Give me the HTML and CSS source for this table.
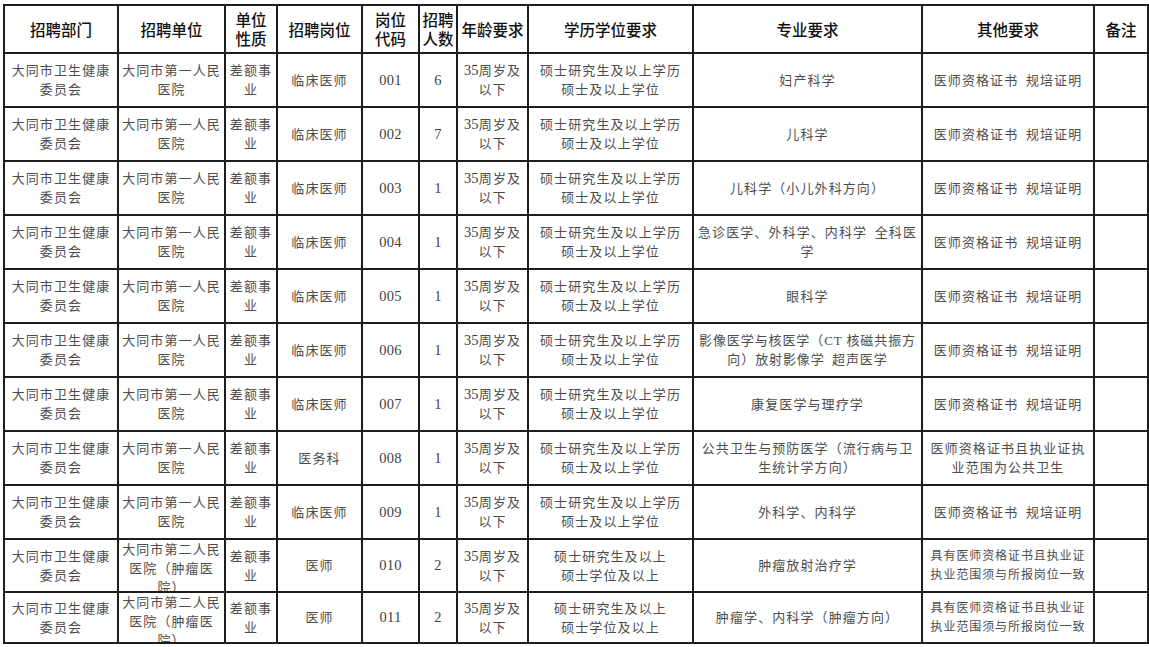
FILE: index.html
```html
<!DOCTYPE html>
<html lang="zh-CN">
<head>
<meta charset="utf-8">
<title>招聘岗位表</title>
<link rel="stylesheet" href="styles.css">
</head>
<body>
<table class="grid">
  <colgroup>
    <col class="w-dept"><col class="w-unit"><col class="w-kind"><col class="w-post"><col class="w-code"><col class="w-num"><col class="w-age"><col class="w-edu"><col class="w-major"><col class="w-other"><col class="w-note">
  </colgroup>
  <thead>
    <tr class="head">
      <th><div class="c"><span>招聘部门</span></div></th>
      <th><div class="c"><span>招聘单位</span></div></th>
      <th><div class="c"><span>单位<br>性质</span></div></th>
      <th><div class="c"><span>招聘岗位</span></div></th>
      <th><div class="c"><span>岗位<br>代码</span></div></th>
      <th><div class="c"><span>招聘<br>人数</span></div></th>
      <th><div class="c"><span>年龄要求</span></div></th>
      <th><div class="c"><span>学历学位要求</span></div></th>
      <th><div class="c"><span>专业要求</span></div></th>
      <th><div class="c"><span>其他要求</span></div></th>
      <th><div class="c"><span>备注</span></div></th>
    </tr>
  </thead>
  <tbody>
    <tr>
      <td><div class="c"><span>大同市卫生健康<br>委员会</span></div></td>
      <td><div class="c"><span>大同市第一人民<br>医院</span></div></td>
      <td><div class="c"><span>差额事<br>业</span></div></td>
      <td><div class="c"><span>临床医师</span></div></td>
      <td><div class="c"><span class="num">001</span></div></td>
      <td><div class="c"><span class="num">6</span></div></td>
      <td><div class="c"><span><b class="num">35</b>周岁及<br>以下</span></div></td>
      <td><div class="c"><span>硕士研究生及以上学历<br>硕士及以上学位</span></div></td>
      <td><div class="c"><span>妇产科学</span></div></td>
      <td><div class="c"><span>医师资格证书&ensp;规培证明</span></div></td>
      <td><div class="c"></div></td>
    </tr>
    <tr>
      <td><div class="c"><span>大同市卫生健康<br>委员会</span></div></td>
      <td><div class="c"><span>大同市第一人民<br>医院</span></div></td>
      <td><div class="c"><span>差额事<br>业</span></div></td>
      <td><div class="c"><span>临床医师</span></div></td>
      <td><div class="c"><span class="num">002</span></div></td>
      <td><div class="c"><span class="num">7</span></div></td>
      <td><div class="c"><span><b class="num">35</b>周岁及<br>以下</span></div></td>
      <td><div class="c"><span>硕士研究生及以上学历<br>硕士及以上学位</span></div></td>
      <td><div class="c"><span>儿科学</span></div></td>
      <td><div class="c"><span>医师资格证书&ensp;规培证明</span></div></td>
      <td><div class="c"></div></td>
    </tr>
    <tr>
      <td><div class="c"><span>大同市卫生健康<br>委员会</span></div></td>
      <td><div class="c"><span>大同市第一人民<br>医院</span></div></td>
      <td><div class="c"><span>差额事<br>业</span></div></td>
      <td><div class="c"><span>临床医师</span></div></td>
      <td><div class="c"><span class="num">003</span></div></td>
      <td><div class="c"><span class="num">1</span></div></td>
      <td><div class="c"><span><b class="num">35</b>周岁及<br>以下</span></div></td>
      <td><div class="c"><span>硕士研究生及以上学历<br>硕士及以上学位</span></div></td>
      <td><div class="c"><span>儿科学（小儿外科方向）</span></div></td>
      <td><div class="c"><span>医师资格证书&ensp;规培证明</span></div></td>
      <td><div class="c"></div></td>
    </tr>
    <tr>
      <td><div class="c"><span>大同市卫生健康<br>委员会</span></div></td>
      <td><div class="c"><span>大同市第一人民<br>医院</span></div></td>
      <td><div class="c"><span>差额事<br>业</span></div></td>
      <td><div class="c"><span>临床医师</span></div></td>
      <td><div class="c"><span class="num">004</span></div></td>
      <td><div class="c"><span class="num">1</span></div></td>
      <td><div class="c"><span><b class="num">35</b>周岁及<br>以下</span></div></td>
      <td><div class="c"><span>硕士研究生及以上学历<br>硕士及以上学位</span></div></td>
      <td><div class="c"><span>急诊医学、外科学、内科学&ensp;全科医<br>学</span></div></td>
      <td><div class="c"><span>医师资格证书&ensp;规培证明</span></div></td>
      <td><div class="c"></div></td>
    </tr>
    <tr>
      <td><div class="c"><span>大同市卫生健康<br>委员会</span></div></td>
      <td><div class="c"><span>大同市第一人民<br>医院</span></div></td>
      <td><div class="c"><span>差额事<br>业</span></div></td>
      <td><div class="c"><span>临床医师</span></div></td>
      <td><div class="c"><span class="num">005</span></div></td>
      <td><div class="c"><span class="num">1</span></div></td>
      <td><div class="c"><span><b class="num">35</b>周岁及<br>以下</span></div></td>
      <td><div class="c"><span>硕士研究生及以上学历<br>硕士及以上学位</span></div></td>
      <td><div class="c"><span>眼科学</span></div></td>
      <td><div class="c"><span>医师资格证书&ensp;规培证明</span></div></td>
      <td><div class="c"></div></td>
    </tr>
    <tr>
      <td><div class="c"><span>大同市卫生健康<br>委员会</span></div></td>
      <td><div class="c"><span>大同市第一人民<br>医院</span></div></td>
      <td><div class="c"><span>差额事<br>业</span></div></td>
      <td><div class="c"><span>临床医师</span></div></td>
      <td><div class="c"><span class="num">006</span></div></td>
      <td><div class="c"><span class="num">1</span></div></td>
      <td><div class="c"><span><b class="num">35</b>周岁及<br>以下</span></div></td>
      <td><div class="c"><span>硕士研究生及以上学历<br>硕士及以上学位</span></div></td>
      <td><div class="c"><span class="tight">影像医学与核医学（CT 核磁共振方<br>向）放射影像学&ensp;超声医学</span></div></td>
      <td><div class="c"><span>医师资格证书&ensp;规培证明</span></div></td>
      <td><div class="c"></div></td>
    </tr>
    <tr>
      <td><div class="c"><span>大同市卫生健康<br>委员会</span></div></td>
      <td><div class="c"><span>大同市第一人民<br>医院</span></div></td>
      <td><div class="c"><span>差额事<br>业</span></div></td>
      <td><div class="c"><span>临床医师</span></div></td>
      <td><div class="c"><span class="num">007</span></div></td>
      <td><div class="c"><span class="num">1</span></div></td>
      <td><div class="c"><span><b class="num">35</b>周岁及<br>以下</span></div></td>
      <td><div class="c"><span>硕士研究生及以上学历<br>硕士及以上学位</span></div></td>
      <td><div class="c"><span>康复医学与理疗学</span></div></td>
      <td><div class="c"><span>医师资格证书&ensp;规培证明</span></div></td>
      <td><div class="c"></div></td>
    </tr>
    <tr>
      <td><div class="c"><span>大同市卫生健康<br>委员会</span></div></td>
      <td><div class="c"><span>大同市第一人民<br>医院</span></div></td>
      <td><div class="c"><span>差额事<br>业</span></div></td>
      <td><div class="c"><span>医务科</span></div></td>
      <td><div class="c"><span class="num">008</span></div></td>
      <td><div class="c"><span class="num">1</span></div></td>
      <td><div class="c"><span><b class="num">35</b>周岁及<br>以下</span></div></td>
      <td><div class="c"><span>硕士研究生及以上学历<br>硕士及以上学位</span></div></td>
      <td><div class="c"><span>公共卫生与预防医学（流行病与卫<br>生统计学方向）</span></div></td>
      <td><div class="c"><span>医师资格证书且执业证执<br>业范围为公共卫生</span></div></td>
      <td><div class="c"></div></td>
    </tr>
    <tr>
      <td><div class="c"><span>大同市卫生健康<br>委员会</span></div></td>
      <td><div class="c"><span>大同市第一人民<br>医院</span></div></td>
      <td><div class="c"><span>差额事<br>业</span></div></td>
      <td><div class="c"><span>临床医师</span></div></td>
      <td><div class="c"><span class="num">009</span></div></td>
      <td><div class="c"><span class="num">1</span></div></td>
      <td><div class="c"><span><b class="num">35</b>周岁及<br>以下</span></div></td>
      <td><div class="c"><span>硕士研究生及以上学历<br>硕士及以上学位</span></div></td>
      <td><div class="c"><span>外科学、内科学</span></div></td>
      <td><div class="c"><span>医师资格证书&ensp;规培证明</span></div></td>
      <td><div class="c"></div></td>
    </tr>
    <tr class="r10">
      <td><div class="c"><span>大同市卫生健康<br>委员会</span></div></td>
      <td><div class="c"><span>大同市第二人民<br>医院（肿瘤医<br>院）</span></div></td>
      <td><div class="c"><span>差额事<br>业</span></div></td>
      <td><div class="c"><span>医师</span></div></td>
      <td><div class="c"><span class="num">010</span></div></td>
      <td><div class="c"><span class="num">2</span></div></td>
      <td><div class="c"><span><b class="num">35</b>周岁及<br>以下</span></div></td>
      <td><div class="c"><span>硕士研究生及以上<br>硕士学位及以上</span></div></td>
      <td><div class="c"><span>肿瘤放射治疗学</span></div></td>
      <td><div class="c"><span class="small">具有医师资格证书且执业证<br>执业范围须与所报岗位一致</span></div></td>
      <td><div class="c"></div></td>
    </tr>
    <tr class="r11">
      <td><div class="c"><span>大同市卫生健康<br>委员会</span></div></td>
      <td><div class="c"><span>大同市第二人民<br>医院（肿瘤医<br>院）</span></div></td>
      <td><div class="c"><span>差额事<br>业</span></div></td>
      <td><div class="c"><span>医师</span></div></td>
      <td><div class="c"><span class="num">011</span></div></td>
      <td><div class="c"><span class="num">2</span></div></td>
      <td><div class="c"><span><b class="num">35</b>周岁及<br>以下</span></div></td>
      <td><div class="c"><span>硕士研究生及以上<br>硕士学位及以上</span></div></td>
      <td><div class="c"><span>肿瘤学、内科学（肿瘤方向）</span></div></td>
      <td><div class="c"><span class="small">具有医师资格证书且执业证<br>执业范围须与所报岗位一致</span></div></td>
      <td><div class="c"></div></td>
    </tr>
  </tbody>
</table>
</body>
</html>
```

FILE: styles.css
```css
html, body {
  margin: 0;
  background: #ffffff;
}

body {
  padding: 4px 0 0 3px;
}

.grid {
  border-collapse: collapse;
  table-layout: fixed;
  width: 1144px;
  font-family: "Liberation Serif", "Noto Sans CJK SC", serif;
  color: #4d4d4d;
  font-size: 13px;
  letter-spacing: 1.1px;
}

.grid th,
.grid td {
  border: 2px solid #1e1e1e;
  padding: 0 2px;
  vertical-align: middle;
}

.w-dept { width: 114px; }
.w-unit { width: 107px; }
.w-kind { width: 52px; }
.w-post { width: 85px; }
.w-code { width: 57px; }
.w-num { width: 38px; }
.w-age { width: 71px; }
.w-edu { width: 165px; }
.w-major { width: 229px; }
.w-other { width: 172px; }
.w-note { width: 54px; }

.c {
  height: 52px;
  display: flex;
  flex-direction: column;
  overflow: hidden;
  line-height: 19px;
}

.c > span {
  margin: auto 0;
  text-align: center;
}

.num {
  font-weight: 400;
  font-size: 14.5px;
  letter-spacing: 0.2px;
  color: #3f3f3f;
}

.tight {
  letter-spacing: 0.9px;
}

.head .c {
  height: 46px;
}

.head th {
  font-family: "Noto Sans CJK SC", sans-serif;
  font-weight: 500;
  font-size: 15.5px;
  letter-spacing: 0;
  color: #111111;
}

.r10 .c {
  height: 51px;
}

.r11 .c {
  height: 49px;
}

.small {
  font-size: 12px;
  letter-spacing: 0.9px;
}
```
